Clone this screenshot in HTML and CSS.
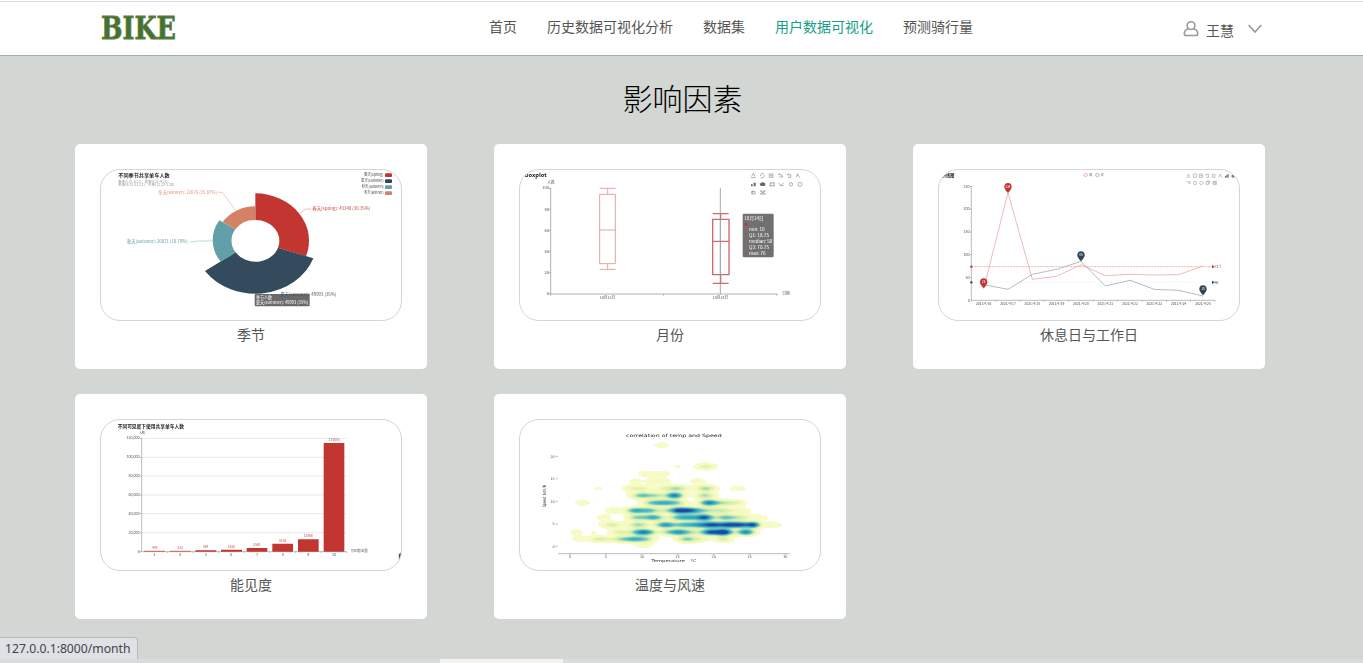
FILE: index.html
```html
<!DOCTYPE html>
<html lang="zh-CN">
<head>
<meta charset="utf-8">
<title>影响因素</title>
<link rel="stylesheet" href="styles.css">
</head>
<body>
<header class="header">
  <div class="logo">
    <svg width="82" height="34" viewBox="0 0 82 34"><text class="logo-text" x="2" y="25" textLength="75" lengthAdjust="spacingAndGlyphs">BIKE</text></svg>
  </div>
  <nav class="nav">
    <a>首页</a><a>历史数据可视化分析</a><a>数据集</a><a class="active">用户数据可视化</a><a>预测骑行量</a>
  </nav>
  <div class="user">
    <svg class="user-icon" width="16" height="18" viewBox="0 0 16 18" fill="none" stroke="#999" stroke-width="1.6"><circle cx="8" cy="5.6" r="3.9"/><path d="M5.200 8.800C2.700 9.600 1.300 11.500 1.300 13.700Q1.300 15.500 3 15.500H13Q14.700 15.500 14.700 13.700C14.700 11.500 13.300 9.600 10.800 8.800"/></svg>
    <span class="user-name">王慧</span>
    <svg class="chevron" width="14" height="10" viewBox="0 0 14 10" fill="none" stroke="#999" stroke-width="1.6"><path d="M.7 1 7 8 13.300 1"/></svg>
  </div>
</header>
<main class="main">
  <h1 class="title">影响因素</h1>
  <div class="grid">
    <section class="card">
      <div class="frame">
        <svg class="chart" viewBox="18 30 900 450">
          <text class="bold" x="70" y="52" font-size="15" textLength="154" lengthAdjust="spacingAndGlyphs">不同季节共享单车人数</text>
          <g fill="#999" font-size="11">
            <text x="70" y="69" textLength="158" lengthAdjust="spacingAndGlyphs">春季(3.21-6.21)、夏季(6.22-9.22)、</text>
            <text x="70" y="78" textLength="168" lengthAdjust="spacingAndGlyphs">秋季(9.23-12.21)、冬季(12.22-3.20)</text>
          </g>
          <path fill="#c23531" d="M481 100A162 142 0 0 1 633 289L549 263A71 62 0 0 0 481 180Z"/>
          <path fill="#334b5c" d="M655 295A185 161 0 0 1 330 333L422 277A71 62 0 0 0 549 263Z"/>
          <path fill="#61a0a8" d="M377 305A128 111 0 0 1 373 181L421 208A71 62 0 0 0 422 277Z"/>
          <path fill="#d48265" d="M383 186A117 103 0 0 1 481 139V180A71 62 0 0 0 421 208Z"/>
          <g fill="none" stroke-width="2">
            <path stroke="#e09a98" d="M616 160 632 147H648"/>
            <path stroke="#e5b4a2" d="M421 150 382 97H368"/>
            <path stroke="#9cc4c8" d="M353 243H310L283 246"/>
          </g>
          <g font-size="13">
            <text x="190" y="101" fill="#dc8f78" textLength="176" lengthAdjust="spacingAndGlyphs">冬天(winner): 22676 (15.87%)</text>
            <text x="652" y="150" fill="#c94a46" textLength="174" lengthAdjust="spacingAndGlyphs">春天(spring): 43348 (30.35%)</text>
            <text x="96" y="248" fill="#61a0a8" textLength="182" lengthAdjust="spacingAndGlyphs">秋天(autumn): 26871 (18.79%)</text>
            <text x="556" y="409" fill="#4b5c6b" textLength="168" lengthAdjust="spacingAndGlyphs">夏天(summer): 49993 (35%)</text>
          </g>
          <g font-size="12" fill="#444">
            <text x="807" y="49" textLength="58" lengthAdjust="spacingAndGlyphs">春天(spring)</text>
            <text x="798" y="67" textLength="68" lengthAdjust="spacingAndGlyphs">夏天(summer)</text>
            <text x="800" y="85" textLength="66" lengthAdjust="spacingAndGlyphs">秋天(autumn)</text>
            <text x="807" y="103" textLength="59" lengthAdjust="spacingAndGlyphs">冬天(winner)</text>
          </g>
          <rect x="870" y="40" width="21" height="11" rx="3" fill="#c23531"/>
          <rect x="870" y="58" width="21" height="11" rx="3" fill="#2f4554"/>
          <rect x="870" y="76" width="21" height="11" rx="3" fill="#61a0a8"/>
          <rect x="870" y="94" width="21" height="11" rx="3" fill="#d48265"/>
          <rect x="479" y="402" width="165" height="37" rx="3" fill="#505050" fill-opacity=".85"/>
          <g fill="#fff" font-size="13">
            <text x="483" y="417" textLength="48" lengthAdjust="spacingAndGlyphs">季节人数</text>
            <text x="483" y="433" textLength="157" lengthAdjust="spacingAndGlyphs">夏天(summer): 49993 (35%)</text>
          </g>
        </svg>
      </div>
      <p class="label">季节</p>
    </section>

    <section class="card">
      <div class="frame">
        <svg class="chart" viewBox="30 30 900 450">
          <text class="bold" x="44" y="51" font-size="16" textLength="66" lengthAdjust="spacingAndGlyphs">boxplot</text>
          <g fill="#555" font-size="12">
            <text x="112" y="71" textLength="22" lengthAdjust="spacingAndGlyphs">人数</text>
            <g text-anchor="end"><text x="117" y="88">100</text><text x="117" y="152">80</text><text x="117" y="215">60</text><text x="117" y="279">40</text><text x="117" y="342">20</text><text x="117" y="405">0</text></g>
            <text x="269" y="416" textLength="47" lengthAdjust="spacingAndGlyphs">10月13日</text>
            <text x="608" y="416" textLength="47" lengthAdjust="spacingAndGlyphs">10月14日</text>
            <text x="817" y="405" textLength="22" lengthAdjust="spacingAndGlyphs">日期</text>
          </g>
          <g fill="none" stroke="#8c8c8c" stroke-width="2">
            <path d="M122 84V402H802M116 85h6M116 148h6M116 211h6M116 275h6M116 338h6M116 401h6M122 402v5M461 402v5M801 402v5"/>
            <path stroke="#999" stroke-width="2.500" d="M631 84V402"/>
          </g>
          <path fill="none" stroke="#e5a3a1" stroke-width="3" d="M269 85H317M293 85V103M269 103H316V311H269ZM269 210H316M293 311V328M269 328H317"/>
          <path fill="none" stroke="#d06a69" stroke-width="4" d="M608 161H656M632 161V178M608 178H657V344H608ZM608 244H657M632 344V370M608 370H656"/>
          <path stroke="#999" stroke-width="2" d="M631 162V370"/>
          <g fill="none" stroke="#888" stroke-width="2">
            <path d="M723 53H737M725 49l5-9 5 9M762 42a6 6 0 0 0-10 6M752 52a6 6 0 0 0 10-6M778 42h11v10h-11ZM781 47h6M805 44h7q6 0 6 7h-10M805 44l4-4M832 44h10v8h-8M832 44l4-4M858 52l5-11 2 7 5 4M779 69h15M779 77h15M781 67v12M792 67v12M806 69l6 8 9-8M812 77h9M725 94h10v8h-10ZM728 92v8M751 93l15 9M751 102l15-9M751 93h15M751 102h15"/>
            <circle cx="843" cy="73" r="5"/><circle cx="870" cy="73" r="6"/>
          </g>
          <path fill="#666" d="M749 71l9-5 9 5-3 7h-12ZM723 73h5v6h-5ZM731 68h6v11h-6Z"/>
          <rect x="698" y="161" width="93" height="131" rx="4" fill="#707070"/>
          <g fill="#fff" font-size="13">
            <text x="703" y="179" textLength="58" lengthAdjust="spacingAndGlyphs">10月14日</text>
            <text x="717" y="214" textLength="47" lengthAdjust="spacingAndGlyphs">min: 10</text>
            <text x="717" y="232" textLength="60" lengthAdjust="spacingAndGlyphs">Q1: 18.75</text>
            <text x="717" y="249" textLength="70" lengthAdjust="spacingAndGlyphs">median: 50</text>
            <text x="717" y="266" textLength="60" lengthAdjust="spacingAndGlyphs">Q3: 70.75</text>
            <text x="717" y="284" textLength="50" lengthAdjust="spacingAndGlyphs">max: 76</text>
          </g>
          <circle cx="708" cy="193" r="5" fill="#c23531"/>
          <path stroke="#b4524e" stroke-width="3" d="M706 210h4M706 228h4M706 245h4M706 262h4M706 280h4"/>
        </svg>
      </div>
      <p class="label">月份</p>
    </section>

    <section class="card">
      <div class="frame">
        <svg class="chart" viewBox="27 30 900 450">
          <text class="bold" x="36" y="51" font-size="13" textLength="37" lengthAdjust="spacingAndGlyphs">折线图</text>
          <g fill="#555" font-size="12">
            <text x="477" y="48" font-size="10">男</text><text x="512" y="48" font-size="10">女</text>
            <g text-anchor="end" font-size="11"><text x="119" y="83">250</text><text x="119" y="151">200</text><text x="119" y="220">150</text><text x="119" y="288">100</text><text x="119" y="356">50</text><text x="119" y="425">0</text></g>
            <g text-anchor="middle" font-size="10">
              <text x="161" y="434">2021/4/16</text><text x="234" y="434">2021/4/17</text><text x="307" y="434">2021/4/18</text><text x="380" y="434">2021/4/19</text><text x="453" y="434">2021/4/20</text><text x="526" y="434">2021/4/21</text><text x="600" y="434">2021/4/22</text><text x="673" y="434">2021/4/23</text><text x="746" y="434">2021/4/24</text><text x="819" y="434">2021/4/25</text>
            </g>
            <text x="854" y="324" font-size="10" fill="#c23531">73.7</text><text x="854" y="371" font-size="10" fill="#2f4554">40</text>
          </g>
          <g fill="none" stroke="#999" stroke-width="2">
            <path d="M124 78V421H856M118 79h6M118 147h6M118 216h6M118 284h6M118 353h6M124 421v4M197 421v4M270 421v4M343 421v4M416 421v4M490 421v4M563 421v4M636 421v4M709 421v4M782 421v4M855 421v4"/>
            <path stroke="#a5a5a5" d="M769 51h12M771 48l4-6 4 6M790 42h10v10h-10ZM808 42h10v10h-10ZM810 47h6M828 43h8v9h-8M828 43v5M847 43h8v9h-8ZM866 52l5-10 2 7 4 3M886 52v-4M890 52v-7M894 52v-9M769 65h11v6h-6M828 65h8v8h-8ZM831 63h8v8M849 64h10v9h-10ZM849 64l10 9M859 64l-10 9"/>
            <circle cx="795" cy="69" r="5" stroke="#aaa"/><circle cx="814" cy="69" r="5" stroke="#aaa"/>
            <path stroke="#df9a98" d="M460 45h14"/><circle cx="467" cy="45" r="5" stroke="#df9a98" fill="#fff"/>
            <path stroke="#97a2a9" d="M495 45h14"/><circle cx="502" cy="45" r="5" stroke="#97a2a9" fill="#fff"/>
          </g>
          <ellipse cx="910" cy="48" rx="6" ry="5" fill="#777"/>
          <path fill="#777" d="M885 48h3v5h-3ZM889 45h3v8h-3ZM893 42h3v11h-3Z"/>
          <path stroke="#e08d8b" stroke-width="2" stroke-dasharray="6 3" d="M124 320H850"/>
          <path stroke="#dfe3e6" stroke-width="1.500" stroke-dasharray="3 3" d="M124 367H850"/>
          <path fill="none" stroke="#ecadab" stroke-width="2.500" d="M161 386 234 98 307 358 380 349 453 314 526 347 600 343 673 345 746 344 819 318"/>
          <path fill="none" stroke="#a3adb4" stroke-width="2.500" d="M161 374 234 388 307 343 380 328 453 304 526 378 600 361 673 388 746 391 819 408"/>
          <circle cx="124" cy="320" r="3.500" fill="#c23531"/><circle cx="124" cy="367" r="3.500" fill="#2f4554"/>
          <path fill="#c23531" d="M846 315l9 5-9 5Z"/><path fill="#2f4554" d="M846 362l9 5-9 5Z"/>
          <g fill="#c23531"><path d="M150 367a11 12 0 1 1 22 0q0 6-11 18q-11-12-11-18Z"/><path d="M223 81a11 12 0 1 1 22 0q0 6-11 18q-11-12-11-18Z"/></g>
          <g fill="#2f4554"><path d="M442 286a11 12 0 1 1 22 0q0 6-11 18q-11-12-11-18Z"/><path d="M808 388a11 12 0 1 1 22 0q0 6-11 18q-11-12-11-18Z"/></g>
          <g fill="#fff" font-size="9" text-anchor="middle"><text x="161" y="370">25</text><text x="234" y="84">234</text><text x="453" y="289">85</text><text x="819" y="391">10</text></g>
        </svg>
      </div>
      <p class="label">休息日与工作日</p>
    </section>

    <section class="card">
      <div class="frame">
        <svg class="chart" viewBox="18 30 900 450">
          <text class="bold" x="68" y="53" font-size="15" textLength="199" lengthAdjust="spacingAndGlyphs">不同可见度下使用共享单车人数</text>
          <g fill="#555" font-size="11">
            <text x="132" y="71" font-size="10" textLength="18" lengthAdjust="spacingAndGlyphs">人数</text>
            <g text-anchor="end"><text x="134" y="88">120,000</text><text x="134" y="145">100,000</text><text x="134" y="201">80,000</text><text x="134" y="258">60,000</text><text x="134" y="314">40,000</text><text x="134" y="371">20,000</text><text x="134" y="428">0</text></g>
            <g text-anchor="middle"><text x="178" y="438">3</text><text x="255" y="438">4</text><text x="332" y="438">5</text><text x="409" y="438">6</text><text x="486" y="438">7</text><text x="563" y="438">8</text><text x="640" y="438">9</text><text x="717" y="438">10</text></g>
            <text x="767" y="427" textLength="53" lengthAdjust="spacingAndGlyphs">可见度(英里)</text>
          </g>
          <path stroke="#e4e4e4" stroke-width="2.500" d="M140 85H756M140 142H756M140 198H756M140 255H756M140 311H756M140 368H756"/>
          <path fill="none" stroke="#999" stroke-width="2" d="M140 84V425H756M134 85h6M134 142h6M134 198h6M134 255h6M134 311h6M134 368h6M134 425h6M217 425v4M294 425v4M371 425v4M448 425v4M525 425v4M602 425v4M679 425v4M755 425v4"/>
          <g fill="#c23531">
            <path opacity=".7" d="M147 422h63v3h-63ZM224 422h63v3h-63Z"/>
            <path d="M301 421h63v4h-63ZM378 419h63v6h-63ZM455 414h62v11h-62ZM532 401h62v24h-62ZM609 388h62v37h-62ZM686 99h62v326h-62Z"/>
            <g font-size="10" text-anchor="middle" opacity=".85"><text x="179" y="417">449</text><text x="256" y="417">522</text><text x="332" y="415">864</text><text x="409" y="413">1536</text><text x="486" y="408">3561</text><text x="563" y="395">8236</text><text x="640" y="382">12966</text><text x="717" y="93">115085</text></g>
          </g>
          <path fill="#505866" d="M911 433l8-6v50h-6Z"/>
        </svg>
      </div>
      <p class="label">能见度</p>
    </section>

    <section class="card">
      <div class="frame layered">
        <canvas class="heat" id="heat" width="900" height="450"></canvas>
        <svg class="chart plot" viewBox="30 30 900 450">
          <text x="348" y="80" font-size="13" fill="#222" textLength="287" lengthAdjust="spacingAndGlyphs">correlation of temp and Speed</text>
          <path fill="none" stroke="#999" stroke-width="2" d="M144 431H840M137 139h7M137 206h7M137 274h7M137 342h7M137 409h7M180 431v5M288 431v5M396 431v5M503 431v5M611 431v5M719 431v5M826 431v5"/>
          <g fill="#444" font-size="10">
            <g text-anchor="end"><text x="134" y="143">20</text><text x="134" y="210">15</text><text x="134" y="278">10</text><text x="134" y="345">5</text><text x="134" y="413">0</text></g>
            <g text-anchor="middle"><text x="180" y="443">0</text><text x="288" y="443">5</text><text x="396" y="443">10</text><text x="503" y="443">15</text><text x="611" y="443">20</text><text x="719" y="443">25</text><text x="826" y="443">30</text></g>
          </g>
          <text x="424" y="455" font-size="11" fill="#333" textLength="101" lengthAdjust="spacingAndGlyphs">Temperature</text>
          <text x="541" y="455" font-size="11" fill="#333" textLength="18" lengthAdjust="spacingAndGlyphs">℃</text>
          <text transform="translate(107 292) rotate(-90)" font-size="14" fill="#333"><tspan x="0" textLength="32" lengthAdjust="spacingAndGlyphs">Speed</tspan><tspan x="38" textLength="30" lengthAdjust="spacingAndGlyphs">km/h</tspan></text>
        </svg>
      </div>
      <p class="label">温度与风速</p>
    </section>
  </div>
</main>
<div class="status">127.0.0.1:8000/month</div>
<div class="scroll"><div class="thumb"></div></div>
<script src="heat.js"></script>
</body>
</html>
```
FILE: styles.css
```css
* { box-sizing: border-box; }
body {
  margin: 0;
  height: 663px;
  overflow: hidden;
  background: #d2d7d3;
  color: #555;
  font: 14px/20px "Noto Sans CJK SC", sans-serif;
}
.header {
  display: grid;
  grid-template-columns: 390px 1fr 181px;
  height: 56px;
  padding-left: 99px;
  background: #fff;
  border-bottom: 1px solid #a6a9a8;
  box-shadow: inset 0 1px #fff, inset 0 2px #d8dbd9;
}
.logo { padding-top: 14px; }
.logo svg, .user svg, .chart { display: block; }
.logo svg { overflow: visible; }
.logo-text {
  font: bold 31px "DejaVu Serif", serif;
  fill: #47702f;
  stroke: #5d8145;
  stroke-width: .8px;
}
.nav { display: flex; gap: 30px; padding-top: 16px; white-space: nowrap; }
.nav .active { color: #16a085; }
.user { display: flex; align-items: flex-start; padding-top: 20px; }
.user-icon { margin-left: 1px; }
.user-name { margin: 0 14px 0 7px; }
.user .chevron { margin-top: 4px; }
.title {
  margin: 0;
  padding: 21px 0 27px 2px;
  color: #000;
  font-size: 30px;
  line-height: 40px;
  font-weight: 300;
  text-align: center;
}
.grid {
  display: grid;
  grid-template-columns: repeat(3, 352px);
  gap: 25px 67px;
  padding-left: 75px;
}
.card { height: 225px; padding: 25px; background: #fff; border-radius: 5px; }
.frame {
  height: 152px;
  overflow: hidden;
  border: 1px solid #d2d7d3;
  border-radius: 20px;
}
.layered { display: grid; }
.layered > * { grid-area: 1 / 1; }
.chart, .heat { width: 300px; height: 150px; }
.chart { font-family: "Noto Sans CJK SC", sans-serif; filter: blur(.3px); }
.plot { font-family: "DejaVu Sans", "Noto Sans CJK SC", sans-serif; }
.heat { filter: blur(.5px); }
.bold { font-weight: bold; fill: #222; }
.label { margin: 3px 0 0; text-align: center; }
.status {
  position: fixed;
  left: 0;
  bottom: 4px;
  width: 138px;
  height: 22px;
  padding-left: 5px;
  background: #dee1e6;
  border: solid #b8bcbb;
  border-width: 1px 1px 0 0;
  border-radius: 0 4px 0 0;
  color: #444;
  font: 12.2px/21px "Noto Sans", sans-serif;
  white-space: nowrap;
}
.scroll { position: fixed; inset: auto 0 0 0; height: 4px; padding-left: 440px; background: #dadbdc; }
.thumb { width: 123px; height: 4px; background: #f3f3f2; }
```
FILE: heat.js
```js
// Density rows: y, then [x, peak, spread] for each cluster.
const rows = [
  [105, [455, .1, 17]],
  [169, [587, .24, 20], [503, .06, 10]],
  [191, [410, .1, 20], [455, .09, 20]],
  [213, [374, .08, 14], [430, .11, 18], [460, .11, 15], [563, .1, 17]],
  [235, [264, .06, 13], [365, .18, 18], [400, .18, 18], [455, .12, 15], [498, .37, 24], [587, .38, 20], [682, .1, 18]],
  [256, [396, .48, 22], [440, .28, 18], [493, .78, 18], [585, .36, 20]],
  [278, [217, .1, 16], [430, .43, 22], [470, .5, 22], [505, .25, 18], [596, .74, 19], [640, .28, 22], [680, .18, 20]],
  [301, [310, .12, 18], [374, .55, 19], [415, .48, 20], [460, .2, 18], [506, .88, 20], [545, .72, 22], [590, .25, 20], [635, .3, 22], [690, .15, 20]],
  [322, [280, .1, 16], [380, .38, 20], [430, .58, 22], [510, .52, 22], [545, .42, 18], [583, .86, 18], [645, .46, 22], [690, .25, 20], [745, .11, 20]],
  [344, [305, .26, 22], [385, .38, 22], [465, .66, 20], [525, .52, 25], [565, .4, 18], [604, .88, 22], [655, .85, 22], [695, .72, 20], [730, .78, 14], [785, .13, 20]],
  [366, [200, .1, 15], [251, .05, 10], [330, .25, 20], [385, .5, 18], [412, .55, 18], [465, .15, 16], [505, .7, 24], [555, .2, 20], [600, .82, 18], [640, 1.1, 18], [707, .74, 18]],
  [387, [208, .09, 17], [270, .27, 22], [330, .28, 20], [372, .55, 22], [410, .28, 18], [530, .42, 20], [570, .15, 18], [640, .27, 18]],
  [405, [402, .1, 18]]
];
const stops = [
  [.04, 247, 251, 203], [.15, 244, 250, 192], [.2, 230, 244, 176], [.3, 208, 237, 179],
  [.42, 127, 205, 187], [.56, 65, 182, 196], [.7, 44, 152, 192], [.84, 36, 100, 172], [.92, 35, 72, 157]
];
function colorAt(value) {
  if (value < stops[0][0]) return null;
  for (let i = 1; i < stops.length; i++) {
    const a = stops[i - 1], b = stops[i];
    if (value < b[0]) {
      const t = (value - a[0]) / (b[0] - a[0]);
      return [1, 2, 3].map(k => a[k] + t * (b[k] - a[k]));
    }
  }
  return stops[stops.length - 1].slice(1);
}
const heat = document.getElementById("heat");
const ctx = heat.getContext("2d");
const image = ctx.createImageData(900, 450);
for (let y = 0; y < 450; y++) {
  const field = new Float32Array(900);
  for (const [cy, ...blobs] of rows) {
    const dy = (y + 30 - cy) / 6.5;
    if (Math.abs(dy) > 4) continue;
    const fy = Math.exp(-dy * dy / 2);
    for (const [cx, peak, spread] of blobs) {
      for (let x = 0; x < 900; x++) {
        const dx = (x + 30 - cx) / spread;
        field[x] += peak * fy * Math.exp(-dx * dx / 2);
      }
    }
  }
  for (let x = 0; x < 900; x++) {
    const color = colorAt(field[x]);
    if (color) image.data.set([...color, 255], (y * 900 + x) * 4);
  }
}
ctx.putImageData(image, 0, 0);
```
